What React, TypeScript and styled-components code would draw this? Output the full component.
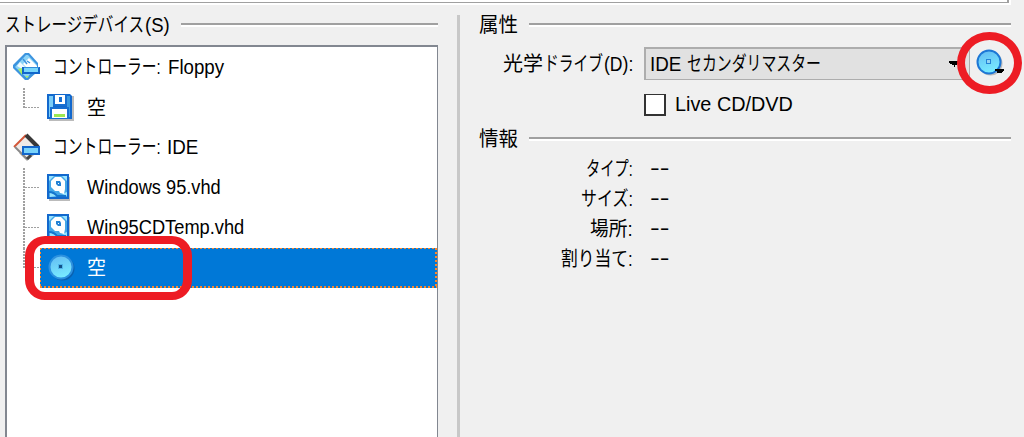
import React, { useLayoutEffect, useRef, useState } from "react";
import styled, { createGlobalStyle } from "styled-components";

const GlobalStyle = createGlobalStyle`
  *, *::before, *::after { box-sizing: border-box; }
  body {
    margin: 0;
    overflow: hidden;
    background: #f0f0f0;
    color: #000;
    font: 20px/24px "Liberation Sans", "Noto Sans CJK JP", sans-serif;
  }
`;

const Window = styled.main`
  position: relative;
  width: 1024px;
  height: 437px;
  overflow: hidden;
  background: #f0f0f0;
`;
const PanelBottom = styled.div`
  width: 1011px;
  height: 5px;
  border: solid #fff;
  border-width: 0 2px 2px 0;
  &::before {
    content: "";
    display: block;
    height: 3px;
    background: #fff;
    border: solid #a0a0a0;
    border-width: 0 2px 1px 0;
  }
`;
const Columns = styled.div`
  display: grid;
  grid-template-columns: 438px 3px 532px;
  column-gap: 19px;
  height: 432px;
`;
const StorageColumn = styled.section`
  display: flex;
  flex-direction: column;
  padding: 8px 0 0 5px;
`;
const Divider = styled.div`
  margin-top: 10px;
  background: #c8c8c8;
`;
const DetailColumn = styled.section`
  padding: 8px 0 0;
`;
const Heading = styled.header`
  display: flex;
  align-items: center;
  height: 24px;
  gap: 11px;
  &::after {
    content: "";
    flex: 1;
    height: 4px;
    background: #fff;
    border-top: 2px solid #a0a0a0;
  }
`;
const Tree = styled.div`
  flex: 1;
  margin-top: 8px;
  padding-top: 1px;
  background: #fff;
  border: solid #828790;
  border-width: 2px 1px 0 2px;
`;
const TreeRow = styled.div<{ $level: number; $selected?: boolean }>`
  display: grid;
  grid-template-columns: ${p => (p.$level ? "40px 40px 1fr" : "6px 40px 1fr")};
  align-items: center;
  height: 40px;
  color: ${p => (p.$selected ? "#fff" : "#000")};
`;
const SelectedRow = styled(TreeRow)`
  grid-template-columns: 33px 1fr;
`;
const SelectedContent = styled.div`
  display: grid;
  grid-template-columns: 39px 1fr;
  align-items: center;
  height: 40px;
  padding-left: 8px;
  background:
    repeating-linear-gradient(to right, #ff8728 0 2px, transparent 2px 4px) 0 0 / 100% 1px no-repeat,
    repeating-linear-gradient(to right, #ff8728 0 2px, transparent 2px 4px) 0 100% / 100% 2px no-repeat,
    repeating-linear-gradient(to bottom, #ff8728 0 2px, transparent 2px 4px) 0 0 / 1px 100% no-repeat,
    repeating-linear-gradient(to bottom, #ff8728 0 2px, transparent 2px 4px) 100% 0 / 2px 100% no-repeat,
    #0078d7;
`;
const Branch = styled.div<{ $last?: boolean }>`
  align-self: stretch;
  width: 33px;
  background:
    repeating-linear-gradient(to bottom, #a0a0a0 0 2px, transparent 2px 3px) 16px 0 / 2px ${p => (p.$last ? "20px" : "100%")} no-repeat,
    repeating-linear-gradient(to right, #a0a0a0 0 2px, transparent 2px 3px) 18px 19px / 15px 1px no-repeat;
`;
const Line = styled.span<{ $gap?: number }>`
  display: flex;
  gap: ${p => p.$gap ?? 1}px;
`;
const RowText = styled(Line)`
  margin-top: -2px;
`;
const FitBox = styled.span<{ $width: number }>`
  display: block;
  flex: none;
  width: ${p => p.$width}px;
  height: 24px;
  white-space: nowrap;
`;
const FitInner = styled.span`
  display: inline-block;
  transform-origin: 0 50%;
`;
const Form = styled.div`
  padding-top: 7px;
`;
const Field = styled.div`
  display: flex;
  align-items: center;
  height: 40px;
`;
const FieldLabel = styled.div`
  display: flex;
  justify-content: flex-end;
  width: 154px;
  margin-right: 11px;
`;
const Combo = styled.div`
  display: flex;
  align-items: center;
  justify-content: space-between;
  width: 326px;
  height: 33px;
  margin-bottom: 1px;
  padding: 0 10px 0 4px;
  background: #e1e1e1;
  border: solid #adadad;
  border-width: 2px 1px 1px 2px;
`;
const DiscButton = styled.div`
  display: flex;
  margin: -2px 0 0 6px;
`;
const Check = styled.div`
  width: 22px;
  height: 22px;
  margin: 2px 9px 0 165px;
  background: #fff;
  border: solid #333;
  border-width: 1px 2px 2px;
`;
const InfoHeading = styled(Heading)`
  margin-top: 3px;
`;
const InfoList = styled.dl`
  margin: 3px 0 0;
`;
const InfoRow = styled.div`
  display: flex;
  align-items: center;
  height: 30px;
`;
const Dashes = styled.dd`
  margin: -2px 0 0 6px;
`;
const TreeMark = styled.div`
  position: absolute;
  left: 25px;
  top: 236px;
  width: 167px;
  height: 64px;
  border: solid #ed1c24;
  border-width: 8px 9px;
  border-radius: 20px;
`;
const DiscMark = styled.div`
  position: absolute;
  left: 957px;
  top: 32px;
  width: 65px;
  height: 62px;
  border: 8px solid #ed1c24;
  border-radius: 50%;
`;
const Icon = styled.svg<{ $raise?: number }>`
  display: block;
  overflow: visible;
  margin-top: ${p => -(p.$raise ?? 0)}px;
`;

function Fit({ width, children }: { width: number; children: string }) {
  const ref = useRef<HTMLSpanElement>(null);
  const [scale, setScale] = useState(1);
  useLayoutEffect(() => {
    if (ref.current) setScale(width / ref.current.offsetWidth);
  }, [width, children]);
  return (
    <FitBox $width={width}>
      <FitInner ref={ref} style={{ transform: `scaleX(${scale})` }}>{children}</FitInner>
    </FitBox>
  );
}

const FloppyController = () => (
  <Icon $raise={2} width="28" height="28" viewBox="0 0 28 28">
    <path d="m15 22 6-1-6 6h-3Z" fill="#aaa" />
    <path d="M12 0h4l9 10v4l-2 6-8 7h-3L0 15v-3Z" fill="#3c94df" />
    <path d="M13 2h2l9 10-10 13L2 14Z" fill="#8bd3f7" />
    <path d="m14 7 2-2 8 8v2H14l-4-4Z" fill="#fff" />
    <path d="m7 9 5 5-3 2-5-3Z" fill="#eefaff" />
    <path d="M10 6l4 5M14 8l3 2" stroke="#3c94df" strokeWidth="1.5" />
    <path d="m5 16 4-1v7Z" fill="#a7ef66" />
    <path d="m12 23 4 0-2 2Z" fill="#a7ef66" />
    <path d="M10 14h16v6H10z" fill="#78d6fb" />
    <path d="M9 14h2v5h14v-5h2v7H9z" fill="#1266cb" />
    <path d="M11 14h15v1H11z" fill="#338edb" />
  </Icon>
);
const IdeController = () => (
  <Icon $raise={2} width="28" height="28" viewBox="0 0 28 28">
    <path d="m6 20 8 8 7-6Z" fill="#aaa" />
    <path d="m13 2 11 11-10 12L2 14Z" fill="#eeeae8" />
    <path d="M1 14 13 2" stroke="#d45738" strokeWidth="2" />
    <path d="m13 2 12 12" stroke="#383838" strokeWidth="4" />
    <path d="m2 14 12 12" stroke="#888" strokeWidth="2" />
    <path d="m14 26 4-4" stroke="#444" strokeWidth="3" />
    <path d="M10 14h16v7H10z" fill="#79d3fa" stroke="#1266cb" strokeWidth="2" />
  </Icon>
);
const Floppy = () => (
  <Icon width="28" height="28" viewBox="0 0 28 28">
    <path d="M2 2h25v25H2z" fill="#bbb" />
    <path d="M0 0h23l2 2v23H0z" fill="#1268cd" />
    <path d="M2 2h4v11h14V2h2v21H2z" fill="#7bcdf7" />
    <path d="M20 2h3v21h-3z" fill="#3b99e0" />
    <path d="M6 1h14v11H6z" fill="#176fd1" />
    <path d="M8 1h10v9H8z" fill="#fff" />
    <path d="M12 3h3v5h-3z" fill="#176fd1" />
    <path d="M3 13h19v12H3z" fill="#176fd1" />
    <path d="M5 15h15v9H5z" fill="#fff" />
    <path d="M7 20h11v3H7z" fill="#9de952" />
  </Icon>
);
const HardDisk = () => (
  <Icon width="23" height="28" viewBox="0 0 23 28">
    <path d="M2 3h21v24H2z" fill="#bbb" />
    <path d="M1 1h20v23H1z" fill="#43a6e6" stroke="#1268cd" strokeWidth="2" />
    <path d="M2 7V2h5ZM15 2h5v5ZM3 18l7 4-7 1ZM15 20l5-2v4Z" fill="#98e4ff" />
    <path d="M8 3h6l4 4v8l-1 5-4-1-1-2H8l-4-4V7Z" fill="#fff" />
    <path d="M9 7h4l1 2v3h-3l-2-2Z" fill="#2482d5" />
    <path d="M11 9h1v1h-1Z" fill="#fff" />
    <path d="M2 18q5 0 8 4h9" fill="none" stroke="#1475ce" strokeWidth="2" />
  </Icon>
);
const Disc = ({ menu }: { menu?: boolean }) => (
  <Icon width="28" height="28" viewBox="0 0 28 28">
    <defs>
      <linearGradient id={menu ? "menuDisc" : "treeDisc"} x1="0" y1="0" x2="0.3" y2="1">
        <stop stopColor="#62b9f2" />
        <stop offset="1" stopColor="#78eaff" />
      </linearGradient>
    </defs>
    <circle cx="14.5" cy="14.5" r="12" fill={menu ? "#bbb" : "#0961b1"} />
    <circle cx="13" cy="13" r="11.5" fill={`url(#${menu ? "menuDisc" : "treeDisc"})`} stroke={menu ? "#1d77d5" : "#2c91df"} strokeWidth="2" />
    <rect x="10" y="10" width="5" height="5" fill={menu ? "#2482d5" : "#50b5ea"} />
    <rect x="11" y="11" width="3" height="3" fill={menu ? "#93d3f3" : "#125087"} />
    {menu && <path d="M19 20h9v2h-1v1h-1v1h-5v-2h-2z" fill="#000" />}
  </Icon>
);
const Arrow = () => (
  <Icon width="10" height="6" viewBox="0 0 10 6" shapeRendering="crispEdges">
    <path d="M0 0h10v2H9v1H8v1H6v2H5V4H3V3H1V2H0z" />
  </Icon>
);

const details = [
  { name: "タイプ:", width: 47 },
  { name: "サイズ:", width: 52 },
  { name: "場所:", width: 43 },
  { name: "割り当て:", width: 72 },
];

export default function App() {
  return (
    <Window>
      <GlobalStyle />
      <PanelBottom />
      <Columns>
        <StorageColumn>
          <Heading><Line><Fit width={139}>ストレージデバイス</Fit><Fit width={25}>(S)</Fit></Line></Heading>
          <Tree>
            <TreeRow $level={0}><span /><FloppyController /><RowText $gap={7}><Fit width={108}>コントローラー:</Fit><Fit width={56}>Floppy</Fit></RowText></TreeRow>
            <TreeRow $level={1}><Branch $last /><Floppy /><Fit width={19}>空</Fit></TreeRow>
            <TreeRow $level={0}><span /><IdeController /><RowText $gap={6}><Fit width={108}>コントローラー:</Fit><Fit width={31}>IDE</Fit></RowText></TreeRow>
            <TreeRow $level={1}><Branch /><HardDisk /><RowText><Fit width={134}>Windows 95.vhd</Fit></RowText></TreeRow>
            <TreeRow $level={1}><Branch /><HardDisk /><RowText><Fit width={157}>Win95CDTemp.vhd</Fit></RowText></TreeRow>
            <SelectedRow $level={1} $selected>
              <Branch $last />
              <SelectedContent><Disc /><Fit width={19}>空</Fit></SelectedContent>
            </SelectedRow>
          </Tree>
        </StorageColumn>
        <Divider />
        <DetailColumn>
          <Heading><Fit width={39}>属性</Fit></Heading>
          <Form>
            <Field>
              <FieldLabel><Line><Fit width={40}>光学</Fit><Fit width={59}>ドライブ</Fit><Fit width={29}>(D):</Fit></Line></FieldLabel>
              <Combo><Line $gap={6}><Fit width={31}>IDE</Fit><Fit width={134}>セカンダリマスター</Fit></Line><Arrow /></Combo>
              <DiscButton><Disc menu /></DiscButton>
            </Field>
            <Field><Check /><Fit width={118}>Live CD/DVD</Fit></Field>
          </Form>
          <InfoHeading><Fit width={39}>情報</Fit></InfoHeading>
          <InfoList>
            {details.map(item => (
              <InfoRow key={item.name}>
                <FieldLabel as="dt"><Fit width={item.width}>{item.name}</Fit></FieldLabel>
                <Dashes><Fit width={19}>--</Fit></Dashes>
              </InfoRow>
            ))}
          </InfoList>
        </DetailColumn>
      </Columns>
      <TreeMark />
      <DiscMark />
    </Window>
  );
}
